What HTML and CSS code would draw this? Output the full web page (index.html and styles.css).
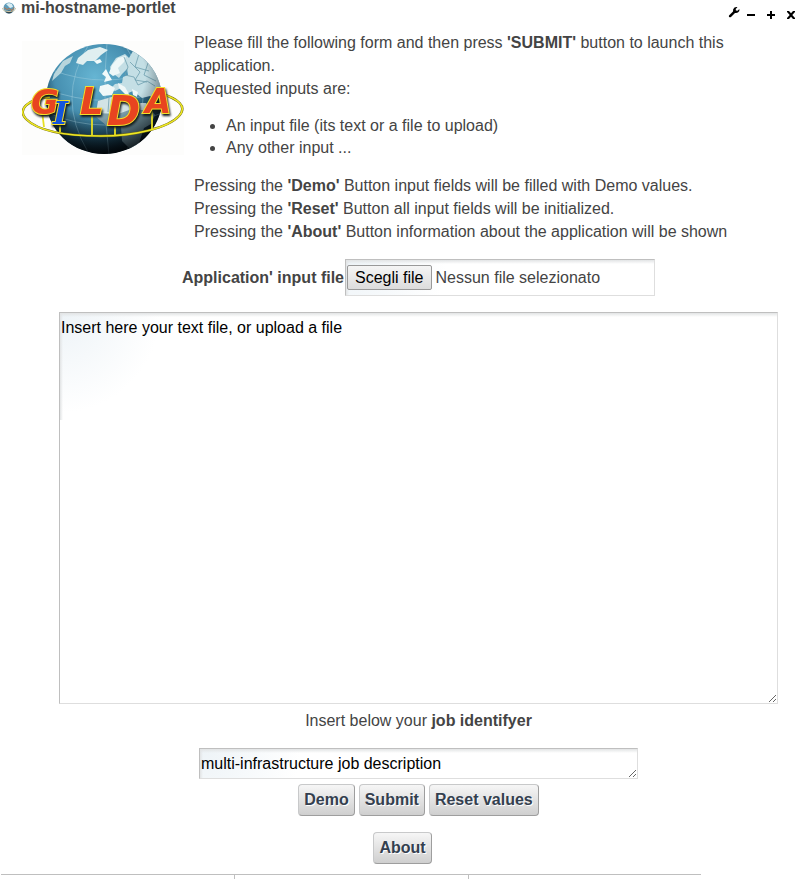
FILE: index.html
```html
<!DOCTYPE html>
<html lang="en">
<head>
<meta charset="utf-8">
<title>mi-hostname-portlet</title>
<link rel="stylesheet" href="styles.css">
</head>
<body>
<section class="portlet">
  <header class="topbar">
    <h1 class="title">
      <svg class="title-icon" viewBox="0 0 14 12" aria-hidden="true">
        <circle cx="7" cy="6" r="5.500" fill="#5f9cba"/>
        <path d="M4 2L7 1l3 1 1 3-3 1-2-2z" fill="#d9edf4"/>
        <path d="M3 9.500q4 4 8 0l-4-1z" fill="#34454f"/>
        <path d="M.5 6q0 3.500 6.500 3.500T13.500 6" fill="none" stroke="#cfc5a4"/>
        <path d="M2 5.500l3 2 2-1 3 2 2-3" fill="none" stroke="#b3764f"/>
      </svg>
      mi-hostname-portlet
    </h1>
    <nav class="tools">
      <button class="tool" type="button" aria-label="Options">
        <svg class="wrench" viewBox="0 0 12 12"><path d="M1 9.400L5 5.500Q4.600 3 6.500 1.600 8 .6 9.500 1.200L7.700 3l.2 1.600 1.600.2 1.900-1.900Q11.800 5 10.200 6.300 9 7.200 7 6.900L3 11Q1.900 11.600 1.200 10.900.5 10.200 1 9.400z"/></svg>
      </button>
      <button class="tool" type="button" aria-label="Minimize">
        <svg class="glyph" viewBox="0 0 8 8"><path d="M0 3h8v2H0z"/></svg>
      </button>
      <button class="tool" type="button" aria-label="Maximize">
        <svg class="glyph" viewBox="0 0 8 8"><path d="M0 3h3V0h2v3h3v2H5v3H3V5H0z"/></svg>
      </button>
      <button class="tool" type="button" aria-label="Close">
        <svg class="glyph" viewBox="0 0 8 8"><path d="M0 0h2l2 2.300L6 0h2v1L5.300 4 8 7v1H6L4 5.700 2 8H0V7l2.700-3L0 1z"/></svg>
      </button>
    </nav>
  </header>

  <div class="intro">
    <svg class="logo" viewBox="0 0 162 114" role="img" aria-label="GILDA">
      <defs>
        <radialGradient id="ocean" cx="42%" cy="30%" r="70%">
          <stop offset="0" stop-color="#66b5d3"/>
          <stop offset=".48" stop-color="#4790b1"/>
          <stop offset=".77" stop-color="#24536b"/>
          <stop offset="1" stop-color="#061118"/>
        </radialGradient>
        <radialGradient id="shade" cx="46%" cy="28%" r="72%">
          <stop offset=".55" stop-color="#071923" stop-opacity="0"/>
          <stop offset="1" stop-color="#020609" stop-opacity=".85"/>
        </radialGradient>
        <clipPath id="ball"><ellipse cx="82" cy="58" rx="58" ry="55"/></clipPath>
      </defs>
      <rect width="162" height="114" fill="#fdfdfc"/>
      <ellipse cx="82" cy="58" rx="58" ry="55" fill="url(#ocean)"/>
      <g clip-path="url(#ball)">
        <g fill="none" stroke="#9bcbdc" stroke-width=".8" opacity=".65">
          <path d="M24 48q58 22 116 2M30 29q52 20 106 0M26 72q56 24 114 0M85 2q-5 54 2 112M66 5q-32 52 0 106M104 6q34 50 0 104"/>
        </g>
        <path d="M56 17l10-8 12-3 8 3-7 5-6 6-8 0-4 4-7-2z" fill="#e0eff0"/>
        <path d="M32 33l9-13 10-5-3 7-5 3-4 7-9 8z" fill="#b7d5dc"/>
        <path d="M72 20l6-2 2 3-5 2zM80 33l4-5 3 6 3 5-8 2 2-5z" fill="#f1fafa"/>
        <path d="M88 26l6-9 9-4 4 4 4-7 12-3 20 26 2 25-10 2-7-5-8 2-9-7-7 3-5-6-6 3-5-2 5-5 7-1 1-6 5-2-1-6-5 5-3 4-4-3 3-6-6 4z" fill="#c4dfe5"/>
        <path d="M90 24l6-7 8-2-2 6-6 6 2 5-7 3-4-3z" fill="#eef8f8"/>
        <path d="M78 45l8-2 7 4-3 7-9 1-4-5zM96 42l7 4 5 9-4-1-7-7zM110 48l6 3-1 5-4-2z" fill="#f0f8f8"/>
        <path d="M76 60l17-5 10 3 6 4 15 0 9 12-4 9-7 4-6 18-8 3-8-8-1-14-14-1-12-10z" fill="#7f9faa"/>
        <path d="M76 60l17-5 10 3 6 4 15 0 6 8-20-2-14 5-22-1z" fill="#d2e3e5"/>
        <path d="M102 16l4 10-3 8 9 2 4 8 9-4 8 5M108 21l10 10-5 8 12 2M117 13l-4 13 14 4M126 22l-4 12 12 6M108 62l2 10-12 3M87 57l-1 14M118 62l-3 10 11 4" fill="none" stroke="#6f9fae" stroke-width=".8"/>
        <ellipse cx="82" cy="58" rx="58" ry="55" fill="url(#shade)"/>
      </g>
      <path d="M28 56C5 58-5 69 4 78c13 13 45 17 75 17 34 0 67-8 78-20 9-10-1-17-19-23" fill="none" stroke="#716914" stroke-width="2.400"/>
      <path d="M28 56C5 58-5 69 4 78c13 13 45 17 75 17 34 0 67-8 78-20 9-10-1-17-19-23" fill="none" stroke="#eee824" stroke-width="1.500"/>
      <path d="M20 70l2 16M38 81v10M70 70v25M93 80v15M130 68v20" fill="none" stroke="#e7df22" stroke-width="1.800"/>
      <g class="logo-letters">
        <text class="logo-g" x="9" y="73">G</text>
        <text class="logo-i" x="31" y="83">I</text>
        <text class="logo-l" x="58" y="73">L</text>
        <text class="logo-d" x="85" y="84">D</text>
        <text class="logo-a" x="123" y="72">A</text>
      </g>
    </svg>
    <div class="copy">
      <p>Please fill the following form and then press <b>'SUBMIT'</b> button to launch this application.<br>Requested inputs are:</p>
      <ul>
        <li>An input file (its text or a file to upload)</li>
        <li>Any other input ...</li>
      </ul>
      <p>Pressing the <b>'Demo'</b> Button input fields will be filled with Demo values.<br>Pressing the <b>'Reset'</b> Button all input fields will be initialized.<br>Pressing the <b>'About'</b> Button information about the application will be shown</p>
    </div>
  </div>

  <form class="form">
    <div class="file-row">
      <label class="file-label" for="file">Application' input file</label>
      <div class="file-box field">
        <span class="file-button">Scegli file</span>
        <span>Nessun file selezionato</span>
        <input class="file-input" id="file" type="file">
      </div>
    </div>
    <textarea class="field source" aria-label="Input file text">Insert here your text file, or upload a file</textarea>
    <label class="job-label" for="job">Insert below your <b>job identifyer</b></label>
    <textarea class="field job" id="job" rows="1">multi-infrastructure job description</textarea>
    <div class="actions">
      <button class="btn" type="button">Demo</button>
      <button class="btn" type="submit">Submit</button>
      <button class="btn" type="reset">Reset values</button>
    </div>
  </form>
  <div class="about"><button class="btn" type="button">About</button></div>
  <div class="columns"><span></span><span></span><span></span></div>
</section>
</body>
</html>
```
FILE: styles.css
```css
* { box-sizing: border-box; }

body {
  margin: 0;
  background: #fff;
  color: #444;
  font: 16px/23px "Liberation Sans", Arial, sans-serif;
}

.topbar {
  display: flex;
  justify-content: space-between;
  align-items: flex-start;
  height: 31px;
  padding: 0 10px 0 2px;
}
.title {
  display: flex;
  align-items: center;
  gap: 5px;
  margin: 0;
  font-size: 16px;
  line-height: 16px;
}
.title-icon { width: 14px; height: 12px; }

.tools {
  display: flex;
  align-items: center;
  gap: 12px;
  padding-top: 6px;
}
.tool {
  display: flex;
  padding: 0;
  border: 0;
  background: none;
}
.wrench { width: 12px; height: 12px; margin: 0 -5px 6px 0; }
.glyph { width: 8px; height: 8px; }

.intro { display: flex; gap: 10px; padding-left: 22px; }
.logo { flex: none; width: 162px; height: 114px; margin-top: 10px; }
.logo-letters {
  fill: #e84420;
  stroke: #f3df2c;
  stroke-width: 2px;
  filter: drop-shadow(1px 2px 1px #101818);
}
.logo text {
  font-family: "DejaVu Sans", sans-serif;
  font-weight: bold;
  font-style: italic;
  paint-order: stroke;
}
.logo .logo-g { font-size: 34px; }
.logo .logo-i { fill: #1455dc; font-family: "DejaVu Serif", serif; font-size: 32px; }
.logo .logo-l { font-size: 37px; }
.logo .logo-d { font-size: 40px; }
.logo .logo-a { font-size: 34px; }

.copy { flex: 1; }
.copy p { margin: 0; }
.copy ul { margin: 15px 0; padding-left: 32px; line-height: 22px; }

.form {
  display: flex;
  flex-direction: column;
  align-items: center;
  padding: 16px 0 0 32px;
}
.field {
  border: 1px solid;
  border-color: #bfbfbf #dedede #dedede #bfbfbf;
  background:
    linear-gradient(#e2e4e5, #fff0) 0 0 / 100% 4px no-repeat,
    linear-gradient(90deg, #e2e4e5, #fff0) 0 0 / 3px 107px no-repeat,
    radial-gradient(circle 100px at 0 0, #edf3f7, #fff) #fff;
}
.file-row {
  display: flex;
  align-items: center;
  gap: 1px;
  width: 473px;
  max-width: 100%;
}
.file-label { font-weight: bold; white-space: nowrap; }
.file-box {
  position: relative;
  display: flex;
  align-items: center;
  flex: 1;
  gap: 4px;
  height: 37px;
  padding: 0 1px;
}
.file-button {
  padding: 0 7px;
  border: 1px solid #999;
  border-radius: 2px;
  background: linear-gradient(#f5f5f5, #dcdcdc);
  color: #000;
}
.file-input { position: absolute; inset: 0; width: 100%; opacity: 0; }

textarea {
  display: block;
  margin: 0;
  color: #000;
  font: inherit;
}
.source {
  width: calc(100% - 54px);
  height: 392px;
  margin-top: 16px;
  padding: 3px 1px;
}
.job-label { margin: 5px 0 16px; }
.job { width: 439px; max-width: 100%; height: 31px; padding: 3px 1px; overflow: hidden; }

.actions { display: flex; gap: 4px; margin-top: 5px; }
.btn {
  height: 32px;
  padding: 0 5px 2px;
  border: 1px solid;
  border-color: #c8c9ca #9e9e9e #9e9e9e #c8c9ca;
  border-radius: 4px;
  background: linear-gradient(#f6f6f6, #cfcfcf);
  color: #34404f;
  font: bold 16px/23px "Liberation Sans", Arial, sans-serif;
  text-shadow: 1px 1px #fff;
}
.about { display: flex; justify-content: center; margin-top: 16px; }

.columns {
  display: grid;
  grid-template-columns: repeat(3, 1fr);
  width: 87%;
  height: 5px;
  margin: 10px 0 0 1px;
  border-top: 1px solid #bfbfbf;
}
.columns span + span { border-left: 1px solid #bfbfbf; }
```
